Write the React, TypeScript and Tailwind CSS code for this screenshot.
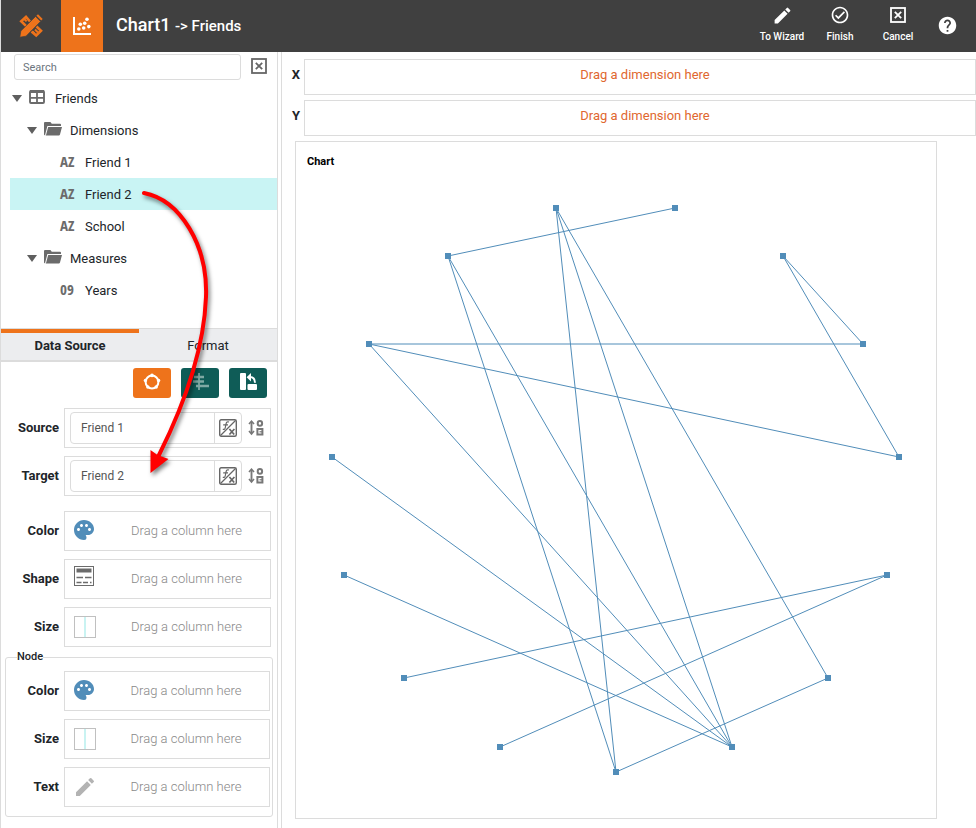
import React from "react";
import { MdEdit, MdHelp, MdOutlineCheckCircle, MdPalette } from "react-icons/md";

const NODES: [number, number][] = [
  [261, 67],
  [380, 67],
  [153, 115],
  [488, 115],
  [74, 203],
  [568, 203],
  [37, 316],
  [604, 316],
  [49, 434],
  [592, 434],
  [109, 537],
  [533, 537],
  [205, 606],
  [437, 606],
  [321, 631],
];

const LINKS: [number, number][] = [
  [2, 1],
  [2, 14],
  [2, 13],
  [0, 14],
  [0, 13],
  [0, 11],
  [3, 5],
  [3, 7],
  [4, 5],
  [4, 7],
  [4, 13],
  [6, 13],
  [8, 13],
  [10, 9],
  [12, 9],
  [14, 11],
];

function Logo() {
  return (
    <svg viewBox="0 0 24 24" className="size-6" fill="none" stroke="#ee731b" aria-hidden="true">
      <path d="M11 7.5 7 2.8 2.2 7.2l5 5M12.500 17.500l4.700 4 4.800-4.800-4.500-4.200" strokeWidth="2.600" />
      <path d="M5 4.800l2.600 2.600M19 18.500l-3-3M16 20l-2.500-2.500" strokeWidth="2" />
      <path d="M.8 23.200l1-6.200L16.600 2.400l5 5L7 22.200z" fill="#ee731b" stroke="#404040" strokeWidth=".7" />
      <path d="M17.400 1.800 19 .3l4.700 4.700-1.500 1.500z" fill="#ee731b" stroke="none" />
    </svg>
  );
}

function ScatterIcon() {
  return (
    <svg viewBox="0 0 18 18" className="size-[18px]" fill="#fff" aria-hidden="true">
      <path d="M0 0h2v16h16v2H0z" />
      <circle cx="5.8" cy="12" r="1.8" />
      <circle cx="7.3" cy="7.2" r="1.8" />
      <circle cx="10.7" cy="11" r="1.8" />
      <circle cx="11.7" cy="6.2" r="1.8" />
      <circle cx="14" cy="2.2" r="1.8" />
      <circle cx="15.8" cy="9.6" r="1.8" />
    </svg>
  );
}

function BoxedX({ className }: { className: string }) {
  return (
    <svg viewBox="0 0 16 16" className={className} fill="none" stroke="currentColor" aria-hidden="true">
      <rect x="1" y="1" width="14" height="14" strokeWidth="1.8" />
      <path d="M4.8 4.8l6.4 6.4M11.2 4.8l-6.4 6.4" strokeWidth="1.8" />
    </svg>
  );
}

function TableIcon() {
  return (
    <svg viewBox="0 0 16 14" className="h-3.5 w-4" fill="none" stroke="#6b6b6b" aria-hidden="true">
      <rect x="1" y="1" width="14" height="12" rx="1" strokeWidth="1.9" />
      <path d="M1 1.500h14" strokeWidth="3" />
      <path d="M8 3v10M1 7.800h14" strokeWidth="1.800" />
    </svg>
  );
}

function FolderIcon() {
  return (
    <svg viewBox="0 0 18 14" className="h-3.5 w-[18px]" fill="#6b6b6b" aria-hidden="true">
      <path d="M1 0h5.400l1.400 1.800H16q1 0 1 1V4H3.400L1.200 12.600 1.200 13.400Q0 13 0 12.400V1Q0 0 1 0z" />
      <path d="M4.200 5H18l-2 7.600q-.3.9-1.200.9H1.900z" />
    </svg>
  );
}

function Caret() {
  return (
    <svg viewBox="0 0 10 7" className="mb-px h-[7px] w-2.5" fill="#5f5f5f" aria-hidden="true">
      <path d="M0 0h10L5 7z" />
    </svg>
  );
}

function CircularIcon() {
  return (
    <svg viewBox="0 0 18 18" className="size-[18px]" fill="#fff" aria-hidden="true">
      <circle cx="9" cy="9" r="6.400" fill="none" stroke="#fff" strokeWidth="2" />
      <circle cx="9" cy="2.400" r="1.800" />
      <circle cx="2.400" cy="7.400" r="1.700" />
      <circle cx="15.600" cy="7.400" r="1.700" />
      <circle cx="4.800" cy="14" r="1.700" />
      <circle cx="13.200" cy="14" r="1.700" />
    </svg>
  );
}

function AlignIcon() {
  return (
    <svg viewBox="0 0 18 18" className="size-[18px]" stroke="#7fa9a4" strokeWidth="2.400" aria-hidden="true">
      <path d="M8 0v17" strokeWidth="1.800" />
      <path d="M3 4h10M2 8.500h11M5 13h13" />
    </svg>
  );
}

function SwapIcon() {
  return (
    <svg viewBox="0 0 18 18" className="size-[18px]" fill="#fff" aria-hidden="true">
      <rect x="1" y="0" width="6" height="17" rx="1" />
      <rect x="8.500" y="11" width="9.500" height="6" rx="1" />
      <path d="M7.600 4.200 12 0v8.400z" />
      <path d="M11 4.100q4.900 0 5 5.700" fill="none" stroke="#fff" strokeWidth="2" />
    </svg>
  );
}

function FormulaIcon() {
  return (
    <svg viewBox="0 0 18 18" className="mb-px size-[18px]" fill="none" stroke="#666" aria-hidden="true">
      <rect x=".7" y=".7" width="16.600" height="16.600" rx="1.500" strokeWidth="1.400" />
      <path d="M1.500 16.500l15-15" strokeWidth="1.200" />
      <path d="M10 3q-2.400-.8-2.900 1.600L6.200 9q-.4 1.900-2.400 1.300M4.200 5.800h4.800" strokeWidth="1.200" />
      <path d="M10.400 10l4.800 5.500M15.400 10l-5 5.500" strokeWidth="1.700" />
    </svg>
  );
}

function SortIcon() {
  return (
    <svg viewBox="0 0 16 16" className="mb-px size-4" fill="none" stroke="#777" aria-hidden="true">
      <path d="M3.500 2v11" strokeWidth="1.900" />
      <path d="M1 4 3.500 1.200 6 4M1 11l2.500 2.900L6 11" strokeWidth="1.600" />
      <rect x="9.700" y="1" width="4.400" height="4.800" rx="2.200" strokeWidth="2" />
      <rect x="9.400" y="9" width="5" height="5.500" strokeWidth="2" />
      <path d="M11.500 11.800h3" strokeWidth="1.200" />
    </svg>
  );
}

function ShapeIcon() {
  return (
    <svg viewBox="0 0 20 20" className="mr-0.5 mb-1.5 size-5" fill="none" stroke="#6b6b6b" aria-hidden="true">
      <rect x=".5" y=".5" width="19" height="19" />
      <path d="M2.500 4.500h15" strokeWidth="4" />
      <path d="M2.500 11.500H9M11 11.500h6.500" strokeWidth="1.600" />
      <path d="M2.500 16.500h5M9 16.500h5M16 16.500h1.500" strokeWidth="1.600" />
    </svg>
  );
}

function SizeIcon() {
  return (
    <svg viewBox="0 0 22 22" className="size-[22px]" aria-hidden="true">
      <rect x=".5" y=".5" width="21" height="21" fill="#fff" stroke="#c0c0c0" />
      <path d="M11 1v20" stroke="#c9f3f2" strokeWidth="2" />
    </svg>
  );
}

function HeaderAction({ label, children }: { label: string; children: React.ReactNode }) {
  return (
    <button type="button" className="flex h-full w-[58px] flex-col items-center gap-[5px] pt-1.5 text-[10px] leading-4 font-medium">
      <span className="flex h-[18px] items-center">{children}</span>
      {label}
    </button>
  );
}

function Group({ label, icon, indent }: { label: string; icon: React.ReactNode; indent: string }) {
  return (
    <button type="button" aria-expanded="true" className={"flex h-8 w-full items-center " + indent}>
      <Caret />
      <span className="mb-1 ml-[7px] flex w-[26px]">{icon}</span>
      {label}
    </button>
  );
}

function Column({ type, label, selected = false }: { type: string; label: string; selected?: boolean }) {
  return (
    <li className="pl-[9px]">
      <button type="button" className={"flex h-8 w-full items-center pl-[50px] " + (selected ? "bg-[#c9f4f4]" : "")}>
        <span className="mb-1 w-[25px] text-left font-['Open_Sans_Condensed',Roboto,sans-serif] text-[15px] leading-4 font-bold text-[#6b6b6b]">{type}</span>
        {label}
      </button>
    </li>
  );
}

function FieldRow({ id, label, value }: { id: string; label: string; value: string }) {
  return (
    <div className="flex items-center">
      <label htmlFor={id} className="w-[58px] shrink-0 text-right font-bold">
        {label}
      </label>
      <div className="ml-[5px] flex h-10 min-w-0 flex-1 items-center border border-[#dcdcdc] pl-[5px]">
        <div className="flex h-8 min-w-0 flex-1 rounded-[4px] border border-[#dcdcdc]">
          <input id={id} readOnly defaultValue={value} className="min-w-0 flex-1 pl-2.5 text-[12px] text-[#555] outline-none" />
          <button type="button" aria-label={"Edit " + label} className="flex w-[27px] items-center justify-center border-l border-[#dcdcdc]">
            <FormulaIcon />
          </button>
        </div>
        <button type="button" aria-label={"Sort " + label} className="flex w-7 items-center justify-center">
          <SortIcon />
        </button>
      </div>
    </div>
  );
}

function DropRow({ label, icon }: { label: string; icon: React.ReactNode }) {
  return (
    <div className="flex items-center">
      <span className="w-[58px] shrink-0 text-right font-bold">{label}</span>
      <div className="ml-[5px] flex h-10 min-w-0 flex-1 items-center border border-[#dcdcdc] pl-1">
        <button type="button" aria-label={label + " options"} className="flex w-8 justify-center">
          {icon}
        </button>
        <span className="flex-1 pl-0.5 text-center font-light text-[#888]">Drag a column here</span>
      </div>
    </div>
  );
}

function AxisRow({ label }: { label: string }) {
  return (
    <div className="flex">
      <span className="w-[22px] pt-1.5 pr-1 text-right font-bold">{label}</span>
      <div className="h-9 flex-1 border border-[#dcdcdc] pt-[5px] pl-2.5 text-center text-[#e0672f]">Drag a dimension here</div>
    </div>
  );
}

function Palette() {
  return <MdPalette className="mr-0.5 mb-0.5 size-6 text-[#518db9]" />;
}

export default function App() {
  return (
    <div className="relative flex min-h-screen flex-col border-l border-[#dcdcdc] bg-white font-[Roboto,'Liberation_Sans',sans-serif] text-[13px] leading-5 text-[#212529]">
      <header className="flex h-13 items-center bg-[#404040] text-white">
        <div className="flex w-15 justify-center">
          <Logo />
        </div>
        <button type="button" aria-label="Chart" className="flex h-full w-[42px] items-center justify-center bg-[#ee731b]">
          <ScatterIcon />
        </button>
        <h1 className="ml-[13px] flex-1 pb-0.5 text-[18px] leading-6 font-medium">
          Chart1 <span className="text-[15px]">-&gt; Friends</span>
        </h1>
        <HeaderAction label="To Wizard">
          <MdEdit className="size-[21px]" />
        </HeaderAction>
        <HeaderAction label="Finish">
          <MdOutlineCheckCircle className="size-5" />
        </HeaderAction>
        <HeaderAction label="Cancel">
          <BoxedX className="size-4" />
        </HeaderAction>
        <button type="button" aria-label="Help" className="mr-[18px] mb-0.5 ml-2.5">
          <MdHelp className="size-[21px]" />
        </button>
      </header>

      <div className="flex flex-1">
        <aside className="flex w-[277px] shrink-0 flex-col border-r border-[#dcdcdc]">
          <div className="flex items-center gap-2.5 pt-0.5 pr-2.5 pl-[13px]">
            <input type="search" aria-label="Search" placeholder="Search" className="h-[26px] min-w-0 flex-1 rounded-[3px] border border-[#dcdcdc] px-2 text-[11px] placeholder:text-[#6c757d]" />
            <button type="button" aria-label="Clear search" className="mb-0.5 text-[#666]">
              <BoxedX className="size-4" />
            </button>
          </div>
          <div className="h-62 pt-0.5 leading-[22px] [&_button]:pt-0.5">
            <Group label="Friends" icon={<TableIcon />} indent="pl-[11px]" />
            <Group label="Dimensions" icon={<FolderIcon />} indent="pl-[26px]" />
            <ul>
              <Column type="AZ" label="Friend 1" />
              <Column type="AZ" label="Friend 2" selected />
              <Column type="AZ" label="School" />
            </ul>
            <Group label="Measures" icon={<FolderIcon />} indent="pl-[26px]" />
            <ul>
              <Column type="09" label="Years" />
            </ul>
          </div>

          <div className="grid h-[34px] grid-cols-2 border-t border-b-2 border-[#dcdcdc] bg-[#ecedef]">
            <button type="button" className="border-t-4 border-[#ee731b] pb-0.5 font-bold">Data Source</button>
            <button type="button" className="pt-0.5">Format</button>
          </div>

          <div className="flex justify-end gap-2.5 pt-1.5 pr-2.5">
            <button type="button" aria-label="Circular layout" className="flex h-[30px] w-[38px] items-center justify-center rounded-[3px] bg-[#ee731b] pb-0.5">
              <CircularIcon />
            </button>
            <button type="button" aria-label="Align" className="flex h-[30px] w-[38px] items-center justify-center rounded-[3px] bg-[#0f5c57] pb-0.5">
              <AlignIcon />
            </button>
            <button type="button" aria-label="Swap source and target" className="flex h-[30px] w-[38px] items-center justify-center rounded-[3px] bg-[#0f5c57] pb-0.5">
              <SwapIcon />
            </button>
          </div>

          <div className="mt-2.5 flex flex-col gap-2 pr-1.5">
            <FieldRow id="source" label="Source" value="Friend 1" />
            <FieldRow id="target" label="Target" value="Friend 2" />
          </div>
          <div className="mt-[15px] flex flex-col gap-2 pr-1.5">
            <DropRow label="Color" icon={<Palette />} />
            <DropRow label="Shape" icon={<ShapeIcon />} />
            <DropRow label="Size" icon={<SizeIcon />} />
          </div>
          <fieldset className="mx-1 mt-0.5 rounded-[3px] border border-[#dcdcdc] pr-0.5 pb-[9px]">
            <legend className="ml-[11px] text-[11px] leading-4 font-medium">Node</legend>
            <div className="-ml-[5px] flex flex-col gap-2 pt-1.5">
              <DropRow label="Color" icon={<Palette />} />
              <DropRow label="Size" icon={<SizeIcon />} />
              <DropRow label="Text" icon={<MdEdit className="size-6 text-[#b3b3b3]" />} />
            </div>
          </fieldset>
        </aside>

        <main className="ml-[3px] min-w-0 flex-1 border-l border-[#dcdcdc]">
          <div className="flex flex-col gap-[5px] pt-[7px]">
            <AxisRow label="X" />
            <AxisRow label="Y" />
          </div>
          <section className="relative mt-[5px] mr-[39px] ml-[13px] border border-[#dcdcdc]">
            <h2 className="absolute top-3 left-[11px] text-[11px] leading-4 font-bold text-black">Chart</h2>
            <svg viewBox="1 1 640 676" className="block w-full" role="img" aria-label="Friends network">
              {LINKS.map(([a, b]) => (
                <line key={a + "-" + b} x1={NODES[a][0]} y1={NODES[a][1]} x2={NODES[b][0]} y2={NODES[b][1]} stroke="#518db9" />
              ))}
              {NODES.map(([x, y]) => (
                <rect key={x + "-" + y} x={x - 3} y={y - 3} width="6" height="6" fill="#518db9" />
              ))}
            </svg>
          </section>
        </main>
      </div>

      <svg viewBox="0 0 90 300" className="pointer-events-none absolute top-[185px] left-[134px] h-[300px] w-[90px] drop-shadow-[2px_3px_2px_rgba(0,0,0,0.5)]" aria-hidden="true">
        <path d="M9 8C45 15 73 60 71 112C69 165 49 220 24 270" fill="none" stroke="#f00" strokeWidth="4" strokeLinecap="round" />
        <path d="M15.500 265l7 5 11 4-18 14z" fill="#f00" />
      </svg>
    </div>
  );
}
